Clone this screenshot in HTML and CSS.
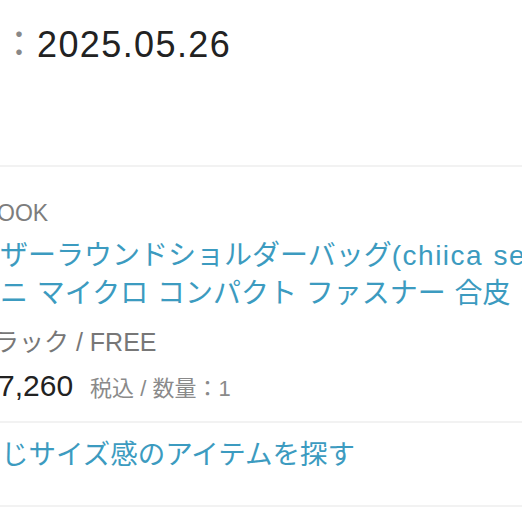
FILE: index.html
```html
<!DOCTYPE html>
<html lang="ja">
<head>
  <meta charset="UTF-8" />
  <meta name="viewport" content="width=device-width, initial-scale=1.0"/>
  <title>注文詳細</title>
  <link rel="stylesheet" href="styles.css">
</head>
<body>
  <div class="summary">
    <div class="date"><span class="colon">：</span>2025.05.26</div>
  </div>

  <div class="item">
    <div class="brand">OOK</div>
    <div class="title">
      <div class="title-line">ザーラウンドショルダーバッグ<span class="latin">(chiica series)</span></div>
      <div class="title-line">ニ マイクロ コンパクト ファスナー 合皮 ショルダーバッグ</div>
    </div>
    <div class="variant">ラック / FREE</div>
    <div class="price-row">
      <span class="price">7,260</span>
      <span class="price-note">税込 / 数量：1</span>
    </div>
  </div>

  <div class="link-row">
    <span class="link">じサイズ感のアイテムを探す</span>
  </div>
</body>
</html>
```

FILE: styles.css
```css
* {
  margin: 0;
  padding: 0;
  box-sizing: border-box;
}

html, body {
  width: 100%;
  height: 100%;
  overflow: hidden;
  background-color: #ffffff;
  font-family: 'Liberation Sans', 'Noto Sans CJK JP', sans-serif;
  color: #222222;
}

.summary {
  height: 165px;
  padding-top: 23px;
}

.date {
  font-size: 36px;
  line-height: 44px;
  letter-spacing: 1.4px;
  white-space: nowrap;
}

.colon {
  margin-left: 1px;
  letter-spacing: 0;
  color: #888888;
}

.item {
  border-top: 2px solid #f2f2f2;
  padding-top: 26px;
  padding-bottom: 12px;
}

.brand {
  font-size: 23px;
  line-height: 40px;
  color: #7d7d7d;
  margin-left: -3px;
}

.title {
  margin-top: 4px;
  font-size: 28px;
  line-height: 38px;
  color: #3c9bc0;
}

.title-line {
  white-space: nowrap;
  word-spacing: 1px;
}

.title-line .latin {
  letter-spacing: 1.5px;
}

.variant {
  margin-top: 10px;
  margin-left: -6px;
  font-size: 25px;
  line-height: 38px;
  color: #777777;
  white-space: nowrap;
}

.price-row {
  margin-top: 5px;
  line-height: 40px;
  display: flex;
  align-items: baseline;
  white-space: nowrap;
}

.price {
  font-size: 30px;
  margin-left: -2px;
  color: #222222;
}

.price-note {
  margin-left: 17px;
  font-size: 22px;
  color: #8a8a8a;
}

.link-row {
  border-top: 2px solid #f2f2f2;
  border-bottom: 2px solid #f2f2f2;
  padding: 12px 0 30px;
}

.link {
  display: block;
  margin-left: 1px;
  font-size: 27.5px;
  line-height: 40px;
  color: #3c9bc0;
  white-space: nowrap;
}
```
